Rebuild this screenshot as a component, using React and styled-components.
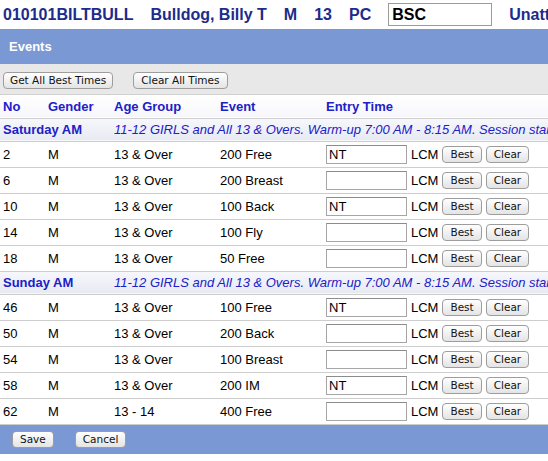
import React from "react";
import styled, { createGlobalStyle } from "styled-components";

const GlobalStyle = createGlobalStyle`
  html, body {
    margin: 0;
    padding: 0;
    overflow: hidden;
    background: #fff;
  }
  body {
    font-family: "Liberation Sans", Arial, Helvetica, sans-serif;
    font-size: 13px;
    color: #000;
  }
`;

const barBlue = "#7a98d3";
const linkBlue = "#2020c8";

const sessions = [
  {
    name: "Saturday AM",
    note: "11-12 GIRLS and All 13 & Overs. Warm-up 7:00 AM - 8:15 AM. Session starts at 8:30 AM.",
    events: [
      { no: 2, age: "13 & Over", event: "200 Free", time: "NT" },
      { no: 6, age: "13 & Over", event: "200 Breast", time: "" },
      { no: 10, age: "13 & Over", event: "100 Back", time: "NT" },
      { no: 14, age: "13 & Over", event: "100 Fly", time: "" },
      { no: 18, age: "13 & Over", event: "50 Free", time: "" },
    ],
  },
  {
    name: "Sunday AM",
    note: "11-12 GIRLS and All 13 & Overs. Warm-up 7:00 AM - 8:15 AM. Session starts at 8:30 AM.",
    events: [
      { no: 46, age: "13 & Over", event: "100 Free", time: "NT" },
      { no: 50, age: "13 & Over", event: "200 Back", time: "" },
      { no: 54, age: "13 & Over", event: "100 Breast", time: "" },
      { no: 58, age: "13 & Over", event: "200 IM", time: "NT" },
      { no: 62, age: "13 - 14", event: "400 Free", time: "" },
    ],
  },
];

export default function App() {
  return (
    <>
      <GlobalStyle />
      <Page>
        <SwimmerLine>
          <span>010101BILTBULL</span>
          <span>Bulldog, Billy T</span>
          <span>M</span>
          <span>13</span>
          <span>PC</span>
          <TeamInput defaultValue="BSC" />
          <span>Unattached</span>
        </SwimmerLine>

        <PanelBar>Events</PanelBar>

        <Toolbar>
          <MacButton $pad={6}>Get All Best Times</MacButton>
          <MacButton $pad={7}>Clear All Times</MacButton>
        </Toolbar>

        <EventTable>
          <colgroup>
            <col style={{ width: 45 }} />
            <col style={{ width: 66 }} />
            <col style={{ width: 106 }} />
            <col style={{ width: 106 }} />
            <col />
          </colgroup>
          <thead>
            <HeadRow>
              <th>No</th>
              <th>Gender</th>
              <th>Age Group</th>
              <th>Event</th>
              <th>Entry Time</th>
            </HeadRow>
          </thead>
          <tbody>
            {sessions.map((s) => (
              <React.Fragment key={s.name}>
                <SessionRow>
                  <SessionName colSpan={2}>{s.name}</SessionName>
                  <SessionNote colSpan={3}>{s.note}</SessionNote>
                </SessionRow>
                {s.events.map((e) => (
                  <EventRow key={e.no}>
                    <td>{e.no}</td>
                    <td>M</td>
                    <td>{e.age}</td>
                    <td>{e.event}</td>
                    <td>
                      <EntryCell>
                        <TimeInput defaultValue={e.time} />
                        <span>LCM</span>
                        <MacButton $pad={7}>Best</MacButton>
                        <MacButton $pad={7}>Clear</MacButton>
                      </EntryCell>
                    </td>
                  </EventRow>
                ))}
              </React.Fragment>
            ))}
          </tbody>
        </EventTable>

        <Footer>
          <MacButton $pad={7}>Save</MacButton>
          <MacButton $pad={7}>Cancel</MacButton>
        </Footer>
      </Page>
    </>
  );
}

const Page = styled.div`
  width: 780px;
`;

const SwimmerLine = styled.div`
  display: flex;
  align-items: center;
  gap: 17px;
  height: 29px;
  padding-left: 3px;
  font-size: 16px;
  font-weight: bold;
  color: #1c2b8c;
  white-space: nowrap;
`;

const TeamInput = styled.input`
  box-sizing: border-box;
  width: 104px;
  height: 23px;
  margin: 0;
  padding: 0 3px;
  border: 1px solid #9c9c9c;
  font-family: "Liberation Sans", Arial, sans-serif;
  font-size: 16px;
  font-weight: bold;
  color: #000;
  outline: none;
`;

const PanelBar = styled.div`
  display: flex;
  align-items: center;
  height: 35px;
  padding-left: 9px;
  background: ${barBlue};
  color: #fff;
  font-size: 13px;
  font-weight: bold;
`;

const Toolbar = styled.div`
  display: flex;
  align-items: flex-start;
  gap: 20px;
  height: 31px;
  box-sizing: border-box;
  padding: 8px 0 0 3px;
  background: #e8e8e8;
  border-bottom: 1px solid #cfcfcf;
`;

const MacButton = styled.button`
  box-sizing: border-box;
  height: 17px;
  margin: 0;
  padding: 0 ${(p) => p.$pad}px;
  border: 1px solid #9d9d9d;
  border-radius: 4px;
  background: linear-gradient(#ffffff, #f1f1f1 50%, #e4e4e4);
  font-family: "DejaVu Sans", "Lucida Grande", sans-serif;
  font-size: 10.5px;
  line-height: 15px;
  color: #111;
  white-space: nowrap;
`;

const EventTable = styled.table`
  border-collapse: collapse;
  table-layout: fixed;
  width: 780px;

  th,
  td {
    padding: 0 0 0 3px;
    text-align: left;
    white-space: nowrap;
    overflow: visible;
  }
`;

const HeadRow = styled.tr`
  height: 23px;
  background: linear-gradient(#ffffff, #f7f7fb);
  border-bottom: 1px solid #cfcfcf;

  th {
    font-size: 13px;
    font-weight: bold;
    color: ${linkBlue};
  }
`;

const SessionRow = styled.tr`
  height: 23px;
  background: linear-gradient(#f7f8fc, #e8eaf3);
  border-bottom: 1px solid #cdcdcd;
`;

const SessionName = styled.td`
  font-weight: bold;
  color: ${linkBlue};
`;

const SessionNote = styled.td`
  font-style: italic;
  color: ${linkBlue};
`;

const EventRow = styled.tr`
  height: 26px;
  border-bottom: 1px solid #cdcdcd;
`;

const EntryCell = styled.div`
  display: flex;
  align-items: center;
  gap: 4px;
`;

const TimeInput = styled.input`
  box-sizing: border-box;
  width: 81px;
  height: 19px;
  margin: 0;
  padding: 0 2px;
  border: 1px solid #a6a6a6;
  border-top-color: #8c8c8c;
  font-family: "Liberation Sans", Arial, sans-serif;
  font-size: 13px;
  color: #000;
  outline: none;
`;

const Footer = styled.div`
  display: flex;
  align-items: center;
  gap: 21px;
  height: 29px;
  padding-left: 12px;
  background: ${barBlue};
`;
